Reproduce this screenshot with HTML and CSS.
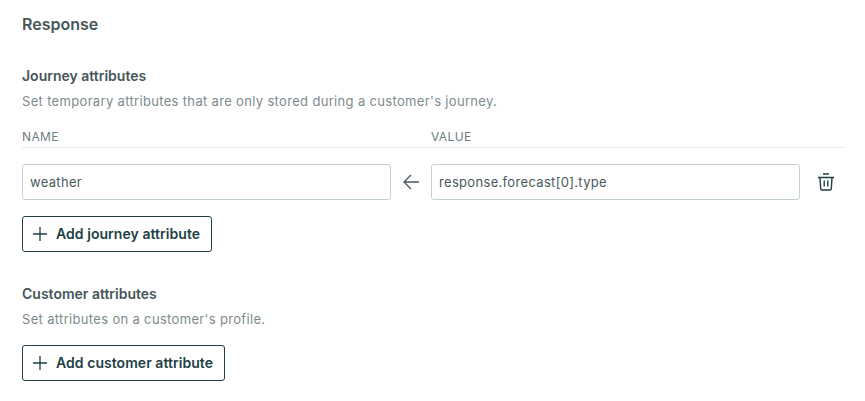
FILE: index.html
```html
<!DOCTYPE html>
<html>
<head>
    <title>Response</title>
    <link rel="stylesheet" href="styles.css">
</head>
<body>
    <div class="container">
        <h2>Response</h2>

        <section class="journey">
            <h3>Journey attributes</h3>
            <p class="hint">Set temporary attributes that are only stored during a customer's journey.</p>

            <div class="attr-head">
                <span>NAME</span>
                <span></span>
                <span>VALUE</span>
                <span></span>
            </div>

            <div class="attr-row">
                <input type="text" value="weather">
                <svg class="arrow" width="16" height="16" viewBox="0 0 16 16" fill="none">
                    <path d="M16 8H1M8 1L1 8l7 7" stroke="#4a5a5d" stroke-width="1.400"/>
                </svg>
                <input type="text" value="response.forecast[0].type">
                <svg class="trash" width="16" height="18" viewBox="0 0 16 18" fill="none">
                    <path d="M0 4.500h16M5 1h6M2 4.500l.7 11.500a1.200 1.200 0 0 0 1.200 1h8.200a1.200 1.200 0 0 0 1.200-1l.7-11.500M6.200 7.500v6M9.800 7.500v6" stroke="#1d3f45" stroke-width="1.400"/>
                </svg>
            </div>

            <button type="button" class="add-btn">
                <svg width="14" height="14" viewBox="0 0 14 14" fill="none">
                    <path d="M7 0v14M0 7h14" stroke="#1d3f45" stroke-width="1.300"/>
                </svg>
                Add journey attribute
            </button>
        </section>

        <section class="customer">
            <h3>Customer attributes</h3>
            <p class="hint">Set attributes on a customer's profile.</p>

            <button type="button" class="add-btn">
                <svg width="14" height="14" viewBox="0 0 14 14" fill="none">
                    <path d="M7 0v14M0 7h14" stroke="#1d3f45" stroke-width="1.300"/>
                </svg>
                Add customer attribute
            </button>
        </section>
    </div>
</body>
</html>
```

FILE: styles.css
```css
body {
    font-family: Inter, "Liberation Sans", sans-serif;
    background-color: #fff;
    color: #4a5a5d;
    margin: 0;
}

.container {
    width: 822px;
    padding: 15px 0 0 22px;
}

h2 {
    margin: 0;
    font-size: 16px;
    line-height: 18px;
    font-weight: 600;
    color: #465659;
}

h3 {
    margin: 0;
    font-size: 14px;
    line-height: 18px;
    font-weight: 600;
    color: #465659;
}

.hint {
    margin: 7px 0 0;
    font-size: 13px;
    line-height: 18px;
    letter-spacing: 0.33px;
    color: #7d8b8d;
}

.journey {
    margin-top: 34px;
}

.customer {
    margin-top: 33px;
}

.attr-head,
.attr-row {
    display: grid;
    grid-template-columns: 369px 40px 369px 44px;
    align-items: center;
}

.attr-head {
    margin-top: 15px;
    height: 22px;
    border-bottom: 1px solid #e6ebeb;
    font-size: 12px;
    letter-spacing: 0.4px;
    color: #6d7c7f;
}

.attr-row {
    margin-top: 16px;
}

.attr-row input {
    box-sizing: border-box;
    width: 100%;
    height: 36px;
    padding: 0 7px;
    border: 1px solid #c5d2d3;
    border-radius: 3px;
    font-family: inherit;
    font-size: 13px;
    letter-spacing: 0.32px;
    color: #4a5a5d;
}

.arrow {
    justify-self: center;
}

.trash {
    justify-self: start;
    margin-left: 18px;
}

.add-btn {
    display: flex;
    align-items: center;
    gap: 9px;
    height: 36px;
    margin-top: 16px;
    padding: 0 11px 1px 10px;
    background-color: #fff;
    border: 1px solid #1d3f45;
    border-radius: 3px;
    font-family: inherit;
    font-size: 14px;
    font-weight: 600;
    letter-spacing: 0.05px;
    color: #1d3f45;
    cursor: pointer;
}

.customer .add-btn {
    margin-top: 17px;
}
```
